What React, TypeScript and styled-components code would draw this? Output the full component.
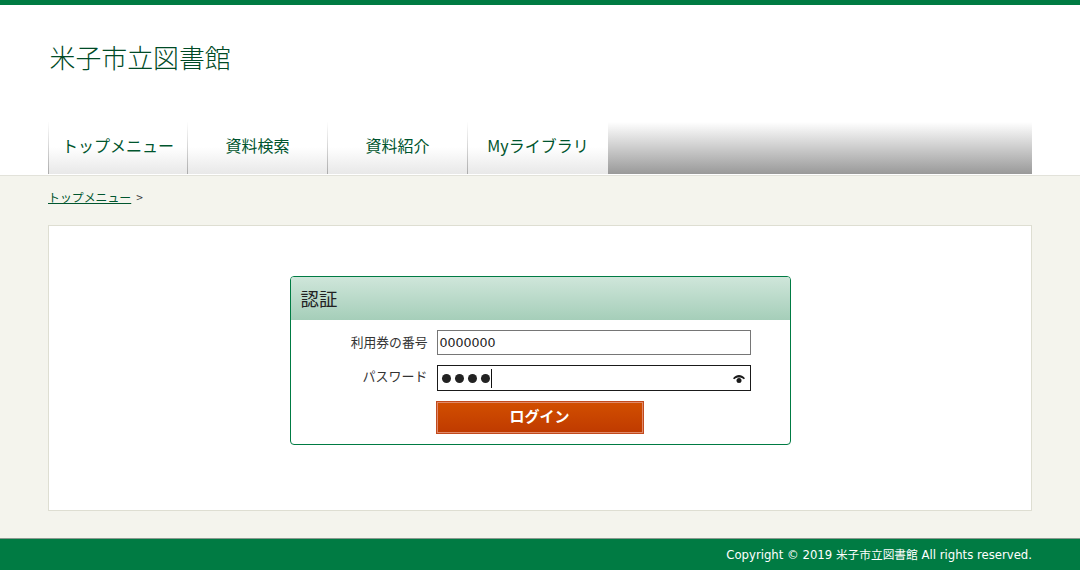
import React from "react";
import styled, { createGlobalStyle } from "styled-components";

const Global = createGlobalStyle`
  html, body { margin: 0; padding: 0; height: 570px; overflow: hidden; }
  body { font-family: "DejaVu Sans", "Noto Sans CJK JP", sans-serif; background: #f4f4ed; color: #222; }
  #root { height: 570px; }
`;

const Page = styled.div`
  display: flex;
  flex-direction: column;
  height: 570px;
  width: 1080px;
`;
const Header = styled.header`
  background: #fff;
  border-top: 5px solid #007b43;
  border-bottom: 1px solid #e2e2da;
  height: 170px;
  padding: 0 48px;
  display: flex;
  flex-direction: column;
  justify-content: space-between;
  box-sizing: content-box;
`;
const Title = styled.h1`
  margin: 34px 0 0 1.5px;
  font-family: "Noto Sans CJK JP", sans-serif;
  font-size: 25.9px;
  font-weight: 300;
  line-height: 36px;
  color: #004a26;
`;
const Nav = styled.nav`
  display: flex;
  height: 52px;
  margin-bottom: 1px;
  background: linear-gradient(#ffffff, #999999);
`;
const NavItem = styled.a`
  width: 140px;
  box-sizing: border-box;
  display: flex;
  align-items: center;
  justify-content: center;
  font-family: "Noto Sans CJK JP", sans-serif;
  font-size: 16px;
  font-weight: 400;
  line-height: 18px;
  color: #00552e;
  border-left: 1px solid;
  border-image: linear-gradient(#fff, #aaa) 1;
  background: linear-gradient(#ffffff 48%, #e8e8e8);
  padding-bottom: 6px;
  &:first-child { width: 139px; }
  &:last-child { width: 141px; }
`;
const Main = styled.main`
  flex: 1;
  padding: 0 48px;
  display: flex;
  flex-direction: column;
`;
const Crumbs = styled.div`
  height: 49px;
  padding-top: 12px;
  box-sizing: border-box;
  font-family: "Noto Sans CJK JP", sans-serif;
  font-size: 11.9px;
  line-height: 18px;
  color: #333;
`;
const CrumbLink = styled.a`
  color: #00552e;
  text-decoration: underline;
  margin-right: 5px;
`;
const Card = styled.section`
  height: 286px;
  box-sizing: border-box;
  background: #fff;
  border: 1px solid #deded2;
  padding-top: 50px;
  display: flex;
  justify-content: center;
  align-items: flex-start;
`;
const Panel = styled.div`
  width: 501px;
  height: 169px;
  box-sizing: border-box;
  border: 1px solid #007b43;
  border-radius: 4px;
  overflow: hidden;
`;
const PanelHead = styled.h2`
  margin: 0;
  height: 43px;
  padding: 0 0 2px 10px;
  box-sizing: border-box;
  display: flex;
  align-items: center;
  font-family: "Noto Sans CJK JP", sans-serif;
  font-size: 18.4px;
  font-weight: 400;
  color: #222;
  background: linear-gradient(#cfe6da, #a5ceb9);
`;
const Form = styled.form`
  display: flex;
  flex-direction: column;
  padding-top: 10px;
  gap: 10px;
`;
const Row = styled.div`
  display: flex;
  align-items: center;
`;
const Label = styled.label<{ $lift?: number; $size?: number }>`
  width: 137px;
  margin-right: 9px;
  text-align: right;
  font-family: "Noto Sans CJK JP", sans-serif;
  font-size: ${(p) => p.$size ?? 12.8}px;
  font-weight: 400;
  line-height: 18px;
  color: #333;
  padding-bottom: ${(p) => p.$lift ?? 2}px;
`;
const Field = styled.div<{ $active?: boolean }>`
  position: relative;
  width: 314px;
  height: ${(p) => (p.$active ? 26 : 25)}px;
  box-sizing: border-box;
  border: 1px solid ${(p) => (p.$active ? "#1a1a1a" : "#767676")};
  display: flex;
  align-items: center;
  padding-left: 2px;
  font-size: 12.6px;
  color: #222;
`;
const Dots = styled.div`
  display: flex;
  gap: 4px;
  padding-left: 2px;
`;
const Dot = styled.span`
  width: 9px;
  height: 9px;
  border-radius: 50%;
  background: #222;
`;
const Caret = styled.span`
  width: 1px;
  height: 19px;
  background: #111;
  margin-left: 1px;
`;
const Eye = styled.svg`
  position: absolute;
  right: 5px;
  top: 9px;
`;
const Submit = styled.button`
  margin-left: 145px;
  width: 208px;
  height: 33px;
  box-sizing: border-box;
  border: 1px solid #c24a1c;
  outline: 1px solid #e08a6a;
  outline-offset: -2px;
  background: linear-gradient(#d24f00, #bf3a00);
  color: #fff;
  font-family: "Noto Sans CJK JP", sans-serif;
  font-size: 15px;
  font-weight: 700;
  line-height: 18px;
  padding: 0 0 4px;
`;
const Footer = styled.footer`
  height: 32px;
  box-sizing: border-box;
  background: #007b43;
  border-top: 1px solid #8a9a90;
  padding: 0 48px 2px 0;
  display: flex;
  align-items: center;
  justify-content: flex-end;
  font-family: "DejaVu Sans", "Noto Sans CJK JP", sans-serif;
  font-size: 11.7px;
  color: #fff;
`;

export default function App() {
  return (
    <Page>
      <Global />
      <Header>
        <Title>米子市立図書館</Title>
        <Nav>
          <NavItem>トップメニュー</NavItem>
          <NavItem>資料検索</NavItem>
          <NavItem>資料紹介</NavItem>
          <NavItem>Myライブラリ</NavItem>
        </Nav>
      </Header>
      <Main>
        <Crumbs>
          <CrumbLink>トップメニュー</CrumbLink>&gt;
        </Crumbs>
        <Card>
          <Panel>
            <PanelHead>認証</PanelHead>
            <Form>
              <Row>
                <Label>利用券の番号</Label>
                <Field>0000000</Field>
              </Row>
              <Row>
                <Label $lift={4} $size={13}>パスワード</Label>
                <Field $active>
                  <Dots>
                    <Dot /><Dot /><Dot /><Dot />
                  </Dots>
                  <Caret />
                  <Eye width="12" height="8" viewBox="0 0 12 8">
                    <path d="M0 3.200C2 .8 4 0 6 0s4 .8 6 3.200L10.800 4.200C9.500 3.200 8 2.600 6 2.600S2.500 3.200 1.200 4.200Z" fill="#1a1a1a" />
                    <circle cx="6" cy="5.400" r="2.500" fill="#1a1a1a" />
                  </Eye>
                </Field>
              </Row>
              <Row>
                <Submit type="button">ログイン</Submit>
              </Row>
            </Form>
          </Panel>
        </Card>
      </Main>
      <Footer>Copyright © 2019 米子市立図書館 All rights reserved.</Footer>
    </Page>
  );
}
